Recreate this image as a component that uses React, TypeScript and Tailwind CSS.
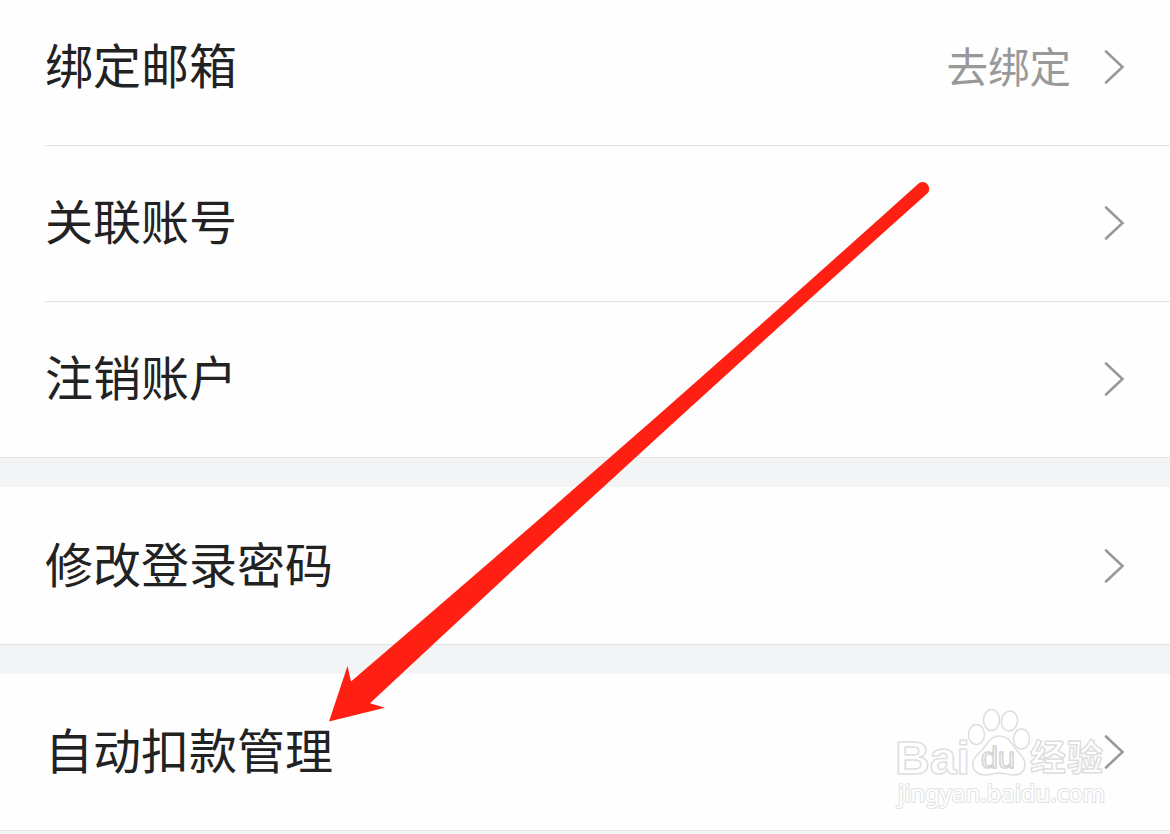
const groups = [
  [
    { label: '绑定邮箱', value: '去绑定' },
    { label: '关联账号' },
    { label: '注销账户' },
  ],
  [{ label: '修改登录密码' }],
  [{ label: '自动扣款管理' }],
];

interface SettingRowProps {
  label: string;
  value?: string;
  last: boolean;
}

function SettingRow({ label, value, last }: SettingRowProps) {
  return (
    <div className={last ? '' : 'pl-[45px]'}>
      <div
        className={`flex h-[156px] items-center justify-between border-b border-[#e3e4e6] pr-[45px] pb-0.5 ${
          last ? 'pl-[45px]' : ''
        }`}
      >
        <span className="pb-[7px] text-[48px] leading-none text-[#222222]">{label}</span>
        <div className="flex items-center gap-[32px]">
          {value && <span className="pb-px text-[41.5px] leading-none text-[#999999]">{value}</span>}
          <svg className="h-[36px] w-[22px]" viewBox="0 0 22 36" fill="none">
            <path d="M3 2.5L19.5 18L3 33.5" stroke="#999999" strokeWidth="2.6" strokeLinecap="round" />
          </svg>
        </div>
      </div>
    </div>
  );
}

function Watermark() {
  return (
    <svg
      className="absolute top-[700px] left-[890px] h-[120px] w-[225px]"
      viewBox="0 0 225 120"
      fill="#ffffff"
      stroke="#dedede"
      strokeWidth="1.5"
      strokeLinejoin="round"
    >
      <text x="5" y="73.5" fontSize="47" fontWeight="700" textLength="75" lengthAdjust="spacingAndGlyphs" fontFamily="'Liberation Sans', sans-serif">
        Bai
      </text>
      {/* Paw toes and pad */}
      <ellipse cx="86.5" cy="34.5" rx="8" ry="10" />
      <ellipse cx="101.5" cy="20" rx="8" ry="10.5" />
      <ellipse cx="119.5" cy="21" rx="8" ry="10" transform="rotate(10 119.5 21)" />
      <ellipse cx="131.5" cy="39" rx="8" ry="10" />
      <path d="M109 36C100 36 98 44 91 51C84 57 82 62 83 67C85 73 89 75 95 75C101 75 104 73 109 73C114 73 117 75 124 75C131 75 135 71 135 64C135 57 129 54 125 48C120 41 118 36 109 36Z" />
      <text x="91" y="68" fontSize="29" fontWeight="400" textLength="34" lengthAdjust="spacingAndGlyphs" stroke="#d3d3d3" fontFamily="'Liberation Sans', sans-serif">
        du
      </text>
      <text x="140" y="70.5" fontSize="36" fontWeight="700" textLength="73" fontFamily="'Noto Sans CJK SC', sans-serif">
        经验
      </text>
      <text x="8" y="101.5" fontSize="23" textLength="207" lengthAdjust="spacingAndGlyphs" paintOrder="stroke" stroke="#e2e2e2" strokeWidth="2" fontFamily="'Noto Sans', sans-serif">
        jingyan.baidu.com
      </text>
    </svg>
  );
}

function PointerArrow() {
  return (
    <svg className="absolute inset-0 h-[834px] w-[1170px]" viewBox="0 0 1170 834">
      <path
        d="M329 721.5L347.5 666L351 681.5Q637 437 918 183.9A6.6 6.6 0 0 1 927.2 193.6Q648 443 370 703.3L385 707.7Z"
        fill="#ff2013"
      />
    </svg>
  );
}

export default function App() {
  return (
    <div className="relative h-[834px] w-[1170px] overflow-hidden bg-[#f2f4f6] font-['Noto_Sans_CJK_SC',sans-serif]">
      {/* The list is scrolled by a few pixels, so the first row is cut at the top */}
      <div className="-mt-[10px] flex flex-col gap-[29px]">
        {groups.map((rows, i) => (
          <div key={i} className={`bg-[#fefefe] ${i === 1 ? 'pt-0.5' : i === 2 ? 'pt-px' : ''}`}>
            {rows.map((row, j) => (
              <SettingRow key={row.label} {...row} last={j === rows.length - 1} />
            ))}
          </div>
        ))}
      </div>
      <Watermark />
      <PointerArrow />
    </div>
  );
}
